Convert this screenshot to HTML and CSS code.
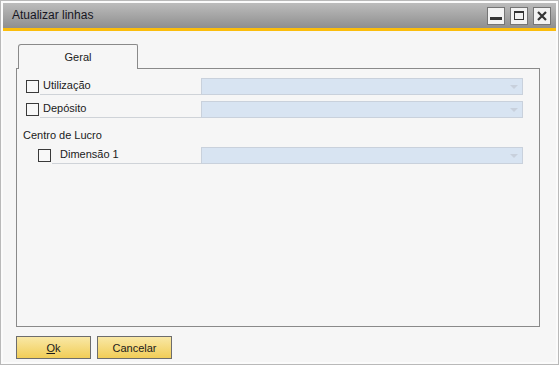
FILE: index.html
```html
<!DOCTYPE html>
<html>
<head>
<meta charset="utf-8">
<link rel="stylesheet" href="styles.css">
</head>
<body>
<div class="window">
  <div class="titlebar">
    <span class="title">Atualizar linhas</span>
    <div class="controls">
      <span class="ctl"><svg width="16" height="16" viewBox="0 0 16 16"><rect x="2" y="9" width="12" height="3" fill="#333"/></svg></span>
      <span class="ctl"><svg width="16" height="16" viewBox="0 0 16 16"><rect x="3.5" y="3.5" width="9" height="8" fill="none" stroke="#333" stroke-width="1"/><rect x="3" y="3" width="10" height="2" fill="#333"/></svg></span>
      <span class="ctl"><svg width="16" height="16" viewBox="0 0 16 16"><path d="M4 4 L12 12 M12 4 L4 12" stroke="#333" stroke-width="2.2"/></svg></span>
    </div>
  </div>
  <div class="accent"></div>
  <div class="content">
    <div class="tabs"><div class="tab">Geral</div></div>
    <div class="panel">
      <div class="row">
        <span class="check"></span>
        <span class="label">Utilização</span>
        <span class="combo"><span class="arrow"></span></span>
      </div>
      <div class="row">
        <span class="check"></span>
        <span class="label">Depósito</span>
        <span class="combo"><span class="arrow"></span></span>
      </div>
      <div class="group">Centro de Lucro</div>
      <div class="row sub">
        <span class="check"></span>
        <span class="label">Dimensão 1</span>
        <span class="combo"><span class="arrow"></span></span>
      </div>
    </div>
    <div class="buttons">
      <button class="btn"><u>O</u>k</button>
      <button class="btn">Cancelar</button>
    </div>
  </div>
</div>
</body>
</html>
```
FILE: styles.css
```css
* { box-sizing: border-box; }
html, body { margin: 0; padding: 0; background: #fff; }
body {
  font-family: "Liberation Sans", Arial, sans-serif;
  font-size: 11px;
  color: #1a1a1a;
}
.window {
  width: 559px;
  height: 365px;
  border: 1px solid #b9b9b9;
  padding: 2px 2px 2px 2px;
  background: #f6f6f6;
  display: flex;
  flex-direction: column;
  box-shadow: inset 0 0 0 2px #fbfbfb;
}
.titlebar {
  height: 25px;
  background: linear-gradient(#bcbcbc, #8f8f8f);
  display: flex;
  align-items: center;
  justify-content: space-between;
  padding: 0 5px 0 9px;
}
.title {
  font-size: 12px;
  color: #161622;
  padding-bottom: 1px;
}
.controls { display: flex; gap: 5px; }
.ctl {
  width: 18px;
  height: 18px;
  border: 1px solid #757575;
  background: #f2f2f2;
  display: flex;
  align-items: center;
  justify-content: center;
}
.accent { height: 3px; background: #fbbd0c; }
.content {
  flex: 1;
  padding: 13px 16px 0 13px;
  display: flex;
  flex-direction: column;
}
.tabs { display: flex; padding-left: 2px; height: 24px; }
.tab {
  width: 120px;
  height: 25px;
  border: 1px solid #8a8a8a;
  border-bottom: none;
  border-top-left-radius: 3px;
  border-top-right-radius: 2px;
  background: #f6f6f6;
  text-align: center;
  padding-top: 6px;
  position: relative;
  z-index: 1;
  color: #1a1a1a;
}
.panel {
  height: 259px;
  border: 1px solid #8a8a8a;
  padding: 9px 16px 0 9px;
  display: flex;
  flex-direction: column;
}
.row {
  display: flex;
  align-items: stretch;
  height: 17px;
  margin-bottom: 6px;
}
.check {
  width: 13px;
  height: 13px;
  border: 1px solid #3a3a3a;
  background: #f8f8f8;
  margin-top: 2px;
  margin-right: 1px;
}
.label {
  flex: 1;
  border-bottom: 1px solid #cfd3d8;
  padding-left: 3px;
  line-height: 15px;
}
.combo {
  width: 322px;
  background: #d8e4f2;
  border: 1px solid #c9d1dc;
  position: relative;
}
.arrow {
  position: absolute;
  right: 4px;
  top: 6px;
  width: 0;
  height: 0;
  border-left: 4px solid transparent;
  border-right: 4px solid transparent;
  border-top: 4px solid #c8d0dc;
}
.group {
  margin-left: -3px;
  margin-top: 3px;
  height: 20px;
  line-height: 16px;
}
.sub { padding-left: 12px; }
.sub .label { padding-left: 8px; }
.buttons {
  display: flex;
  gap: 6px;
  padding-top: 9px;
  padding-left: 0;
}
.btn {
  width: 75px;
  height: 23px;
  border: 1px solid #6d6d6d;
  background: linear-gradient(#f9e8a6, #f1cd57);
  font-family: "Liberation Sans", Arial, sans-serif;
  font-size: 11px;
  color: #1a1a1a;
  padding: 0;
}
```
